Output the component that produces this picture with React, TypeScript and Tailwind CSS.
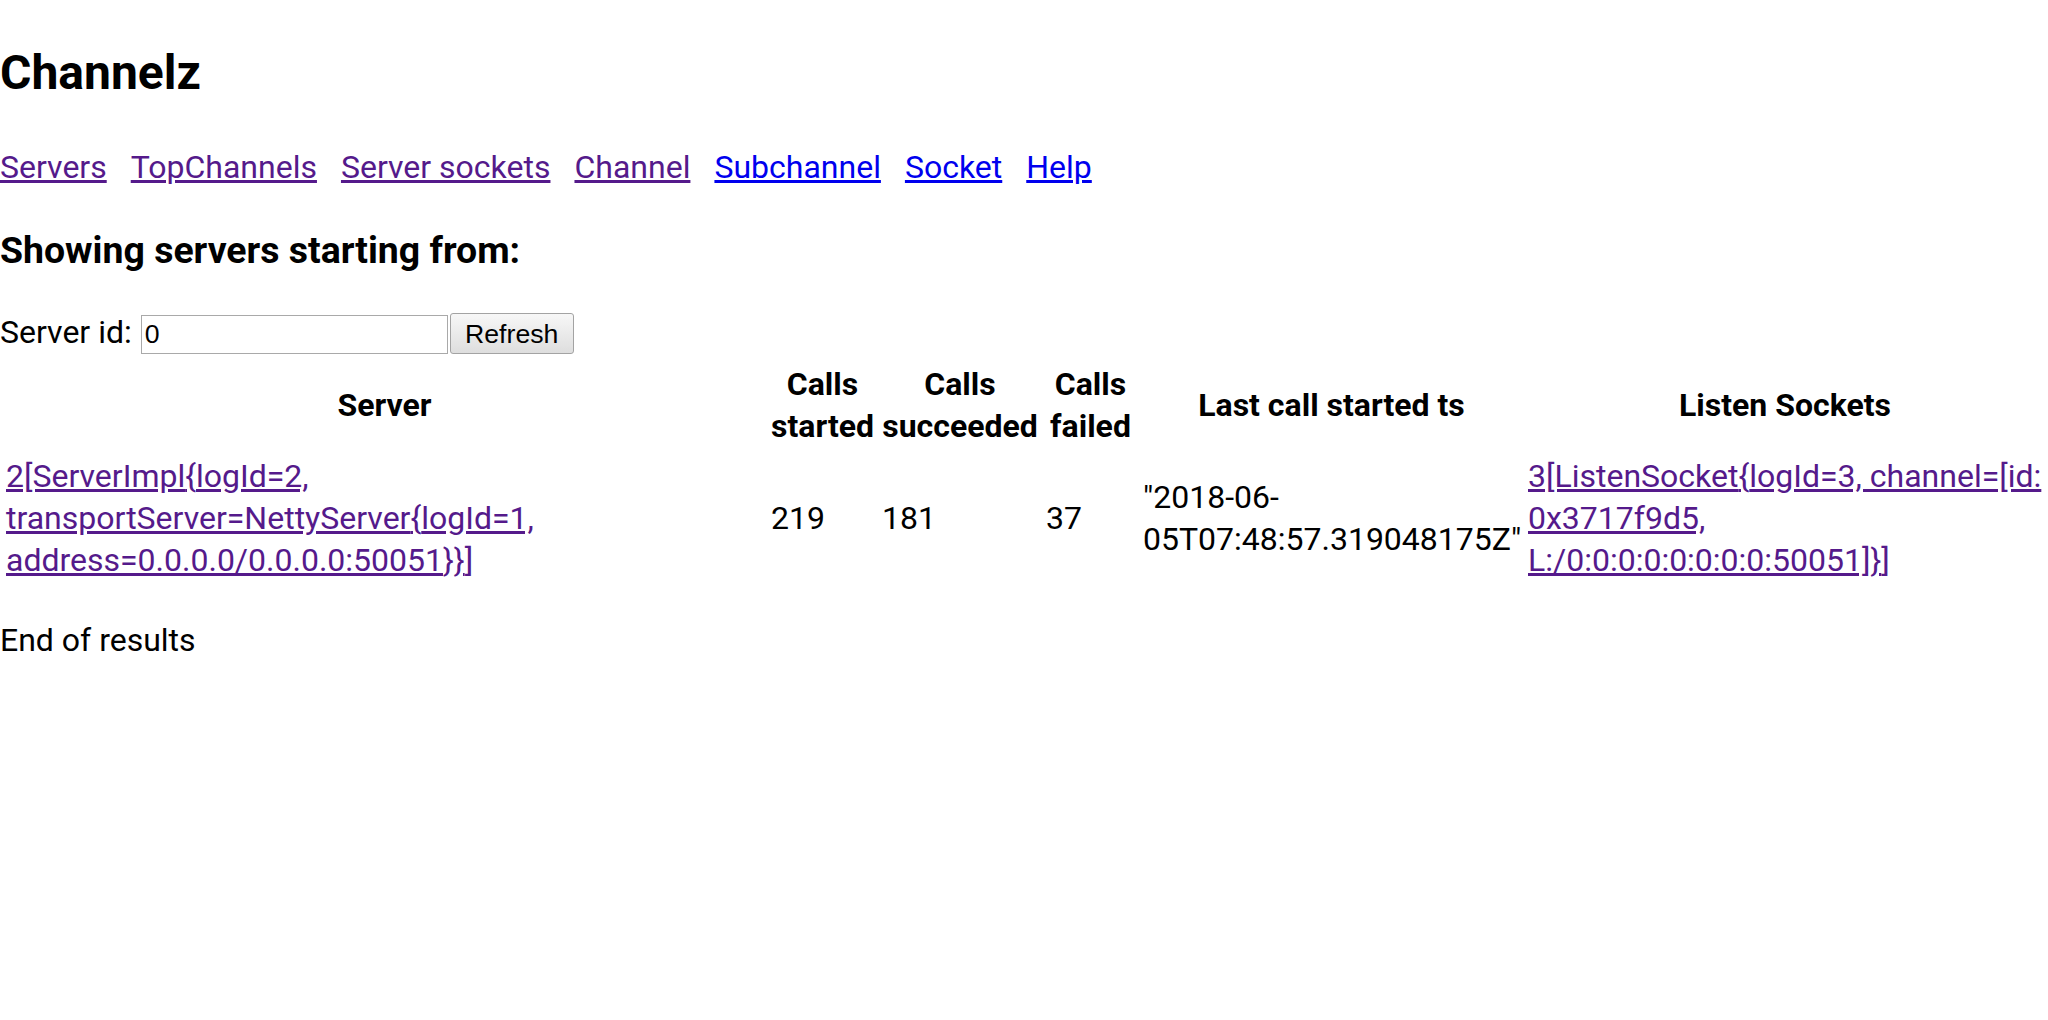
const visited = "text-[#551a8b] underline";
const unvisited = "text-[#0000ee] underline";

const navLinks = [
  { label: "Servers", seen: true },
  { label: "TopChannels", seen: true },
  { label: "Server sockets", seen: true },
  { label: "Channel", seen: true },
  { label: "Subchannel", seen: false },
  { label: "Socket", seen: false },
  { label: "Help", seen: false },
];

const th = "p-0.5 text-center align-middle font-bold";
const td = "p-0.5 text-left align-middle";

export default function App() {
  return (
    <div className="min-h-screen bg-white font-['Roboto',sans-serif] text-[32px] leading-[42px] text-black">
      <h1 className="pt-[41px] text-[48px] font-bold leading-[63px]">Channelz</h1>

      <nav className="mt-[42px] flex gap-6">
        {navLinks.map((l) => (
          <a key={l.label} href="#" className={l.seen ? visited : unvisited}>
            {l.label}
          </a>
        ))}
      </nav>

      <h3 className="mt-[38px] text-[37.44px] font-bold leading-[49px]">
        Showing servers starting from:
      </h3>

      <form className="mt-[36px] flex items-baseline" onSubmit={(e) => e.preventDefault()}>
        <span>Server id:</span>
        <input
          defaultValue="0"
          className="ml-[9px] h-[39px] w-[307px] border border-[#a9a9a9] bg-white px-[3px] font-['Liberation_Sans',Arial,sans-serif] text-[26.67px] leading-normal text-black outline-none"
        />
        <button
          type="submit"
          className="ml-[2px] h-[41px] w-[124px] rounded-[3px] border border-[#a3a3a3] bg-gradient-to-b from-[#f7f7f7] to-[#dedede] font-['Liberation_Sans',Arial,sans-serif] text-[26.67px] leading-normal text-black"
        >
          Refresh
        </button>
      </form>

      <table className="mt-[3px] w-full table-fixed border-separate border-spacing-1">
        <colgroup>
          <col className="w-[761px]" />
          <col className="w-[107px]" />
          <col className="w-[160px]" />
          <col className="w-[93px]" />
          <col className="w-[381px]" />
          <col />
        </colgroup>
        <thead>
          <tr>
            <th className={th}>Server</th>
            <th className={th}>Calls started</th>
            <th className={th}>Calls succeeded</th>
            <th className={th}>Calls failed</th>
            <th className={th}>Last call started ts</th>
            <th className={th}>Listen Sockets</th>
          </tr>
        </thead>
        <tbody>
          <tr>
            <td className={td}>
              <a href="#" className={visited}>
                2[ServerImpl{"{"}logId=2, transportServer=NettyServer{"{"}logId=1,
                address=0.0.0.0/0.0.0.0:50051{"}}"}]
              </a>
            </td>
            <td className={td}>219</td>
            <td className={td}>181</td>
            <td className={td}>37</td>
            <td className={td}>"2018-06-05T07:48:57.319048175Z"</td>
            <td className={td}>
              <a href="#" className={visited}>
                3[ListenSocket{"{"}logId=3, channel=[id: 0x3717f9d5,
                L:/0:0:0:0:0:0:0:0:50051]{"}"}]
              </a>
            </td>
          </tr>
        </tbody>
      </table>

      <p className="mt-[32px]">End of results</p>
    </div>
  );
}
